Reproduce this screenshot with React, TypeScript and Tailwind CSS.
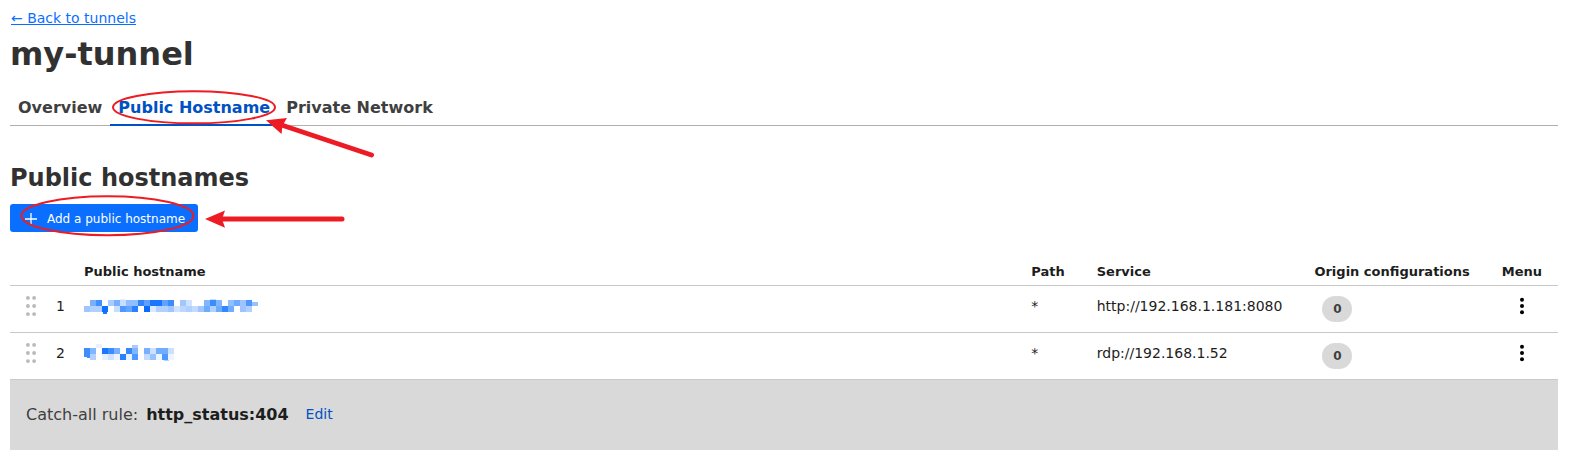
import React from "react";

const tabs = [
  { label: "Overview", active: false },
  { label: "Public Hostname", active: true },
  { label: "Private Network", active: false },
];

type Block = [x: number, y: number, w: number, h: number, fill: string];

type Row = {
  id: number;
  service: string;
  viewBox: string;
  top: string[];
  bottom: string[];
  extra: Block[];
};

// Each entry is one cell of the redacted hostname; an empty string is a blank cell.
const rows: Row[] = [
  {
    id: 1,
    service: "http://192.168.1.181:8080",
    viewBox: "0 0 174 20",
    top: [
      "", "#78b0ff", "#4190ff", "", "#a8ccff", "#78b0ff", "#c8deff", "#90beff", "#90beff", "#2f84ff",
      "#5da0ff", "#1a75ff", "#1a75ff", "#5fa2ff", "#3b8bff", "", "#a0c8ff", "#cfe2ff", "", "",
      "#80b5ff", "#3b8dff", "#80b5ff", "", "#90beff", "#6eaaff", "#9dc4ff", "#4d97ff", "",
    ],
    bottom: [
      "#a0c6ff", "#b0d0ff", "#b0d0ff", "#0f6fff", "", "#c8deff", "#4f98ff", "#65a5ff", "#2a80ff", "",
      "#0a6cff", "#dceaff", "#b0d0ff", "#b0d0ff", "#a0c6ff", "#d0e3ff", "#bcd7ff", "#b0d0ff", "#c4dbff", "#a0c6ff",
      "#6dabff", "#b0d0ff", "#6dabff", "#3388ff", "#70acff", "", "#9dc4ff", "#b0d0ff",
    ],
    extra: [
      [36, 3, 6, 1, "#e3eeff"],
      [126, 3, 6, 1, "#c8deff"],
      [19, 16, 4, 2, "#1a78ff"],
      [168, 6, 6, 4, "#98c2ff"],
    ],
  },
  {
    id: 2,
    service: "rdp://192.168.1.52",
    viewBox: "0 -1 174 20",
    top: [
      "#3d8dff", "#80b5ff", "", "#1a78ff", "#3d8dff", "#78b0ff", "", "#3688ff", "#80b5ff", "",
      "#78b0ff", "#cde1ff", "#70acff", "#70acff", "#cde1ff",
    ],
    bottom: [
      "", "#b0d0ff", "", "#e6f0ff", "#cfe2ff", "#edf4ff", "#2a80ff", "#e8f1ff", "#4f98ff", "",
      "#c4dbff", "#98c2ff", "#eef5ff", "#4f98ff", "#eef5ff",
    ],
    extra: [
      [12, 0, 6, 4, "#eaf2ff"],
      [48, 1, 6, 3, "#a8ccff"],
      [0, 10, 6, 3, "#3d8dff"],
      [3, 13, 3, 1, "#3d8dff"],
      [80, 16, 5, 1, "#b0d0ff"],
    ],
  },
];

function Redacted({ row }: { row: Row }) {
  return (
    <svg width="174" height="20" viewBox={row.viewBox} shapeRendering="crispEdges" role="img" aria-label="Hidden hostname">
      {row.top.map((c, i) => (c ? <rect key={"t" + i} x={i * 6} y={4} width={6} height={6} fill={c} /> : null))}
      {row.bottom.map((c, i) => (c ? <rect key={"b" + i} x={i * 6} y={10} width={6} height={6} fill={c} /> : null))}
      {row.extra.map(([x, y, w, h, c], i) => (
        <rect key={"e" + i} x={x} y={y} width={w} height={h} fill={c} />
      ))}
    </svg>
  );
}

function Grip() {
  return (
    <svg width="10" height="20" viewBox="0 0 10 20" fill="#b9b9b9" aria-hidden="true">
      {[1.9, 10, 18.1].map((y) => (
        <React.Fragment key={y}>
          <circle cx="1.9" cy={y} r="1.9" />
          <circle cx="8.1" cy={y} r="1.9" />
        </React.Fragment>
      ))}
    </svg>
  );
}

function Annotations() {
  return (
    <svg
      className="pointer-events-none absolute top-0 left-0"
      width="400"
      height="240"
      viewBox="0 0 400 240"
      fill="none"
      aria-hidden="true"
    >
      <g stroke="#ed1c24" strokeWidth="2">
        <ellipse cx="194" cy="107.3" rx="81" ry="16" />
        <ellipse cx="107.5" cy="215.7" rx="86" ry="19.5" />
      </g>
      <g stroke="#ed1c24" strokeWidth="5" strokeLinecap="round">
        <path d="M280 124.5L371.5 155" />
        <path d="M221 219H342" />
      </g>
      <g fill="#ed1c24">
        <path d="M266 120.300L287 118L282.500 125.500L281.500 134Z" />
        <path d="M205 219L225 210.500L222 219L225 227.800Z" />
      </g>
    </svg>
  );
}

export default function App() {
  return (
    <main className="relative bg-white pt-2 pr-[11px] pb-3.5 pl-2.5 font-['DejaVu_Sans',sans-serif] text-sm text-[#1d1d1d]">
      <div className="px-px">
        <a href="#tunnels" className="block w-fit leading-5 text-[#0a6fff] underline">
          ← Back to tunnels
        </a>
      </div>
      <h1 className="mt-1.5 text-[32px] leading-10 font-bold text-[#313131]">my-tunnel</h1>

      <nav className="mt-4 flex border-b border-[#b0b0b0]" aria-label="Tunnel sections">
        {tabs.map((t) => (
          <a
            key={t.label}
            href="#tab"
            aria-current={t.active ? "page" : undefined}
            className={
              t.active
                ? "-mb-px border-b-2 border-[#0051c3] px-2 pt-1.5 pb-1 text-base font-bold text-[#0051c3]"
                : "-mb-px border-b-2 border-transparent px-2 pt-1.5 pb-1 text-base font-bold text-[#3f3f3f]"
            }
          >
            {t.label}
          </a>
        ))}
      </nav>

      <h2 className="mt-9 text-2xl leading-8 font-bold text-[#313131]">Public hostnames</h2>

      <button
        type="button"
        className="mt-2.5 flex h-7 items-center gap-2.5 rounded-[3px] bg-[#0a6fff] pt-px pr-[13px] pl-[15px] text-xs text-white"
      >
        <svg width="12" height="12" viewBox="0 0 12 12" stroke="#ffffff" strokeWidth="1.3" aria-hidden="true">
          <path d="M6 0V12M0 6H12" />
        </svg>
        Add a public hostname
      </button>

      <table className="mt-6 w-full border-collapse text-left">
        <thead>
          <tr className="border-b border-[#c9c9c9] text-[13px] leading-5 whitespace-nowrap">
            <th className="p-0" aria-label="Reorder" />
            <th className="p-0" aria-label="Order" />
            <th className="w-full px-4 pt-1.5 pb-[3px]">Public hostname</th>
            <th className="px-4 pt-1.5 pb-[3px]">Path</th>
            <th className="px-4 pt-1.5 pb-[3px]">Service</th>
            <th className="px-4 pt-1.5 pb-[3px]">Origin configurations</th>
            <th className="px-4 pt-1.5 pb-[3px]">Menu</th>
          </tr>
        </thead>
        <tbody>
          {rows.map((row) => (
            <tr key={row.id} className="h-[47px] border-b border-[#c9c9c9] align-top leading-5 whitespace-nowrap">
              <td className="pt-2.5 pl-4">
                <button type="button" aria-label="Drag to reorder" className="block">
                  <Grip />
                </button>
              </td>
              <td className="pt-2.5 pr-[3px] pl-5">{row.id}</td>
              <td className="px-4 pt-2.5">
                <div className="h-5">
                  <Redacted row={row} />
                </div>
              </td>
              <td className="px-4 pt-2.5">*</td>
              <td className="px-4 pt-2.5">{row.service}</td>
              <td className="px-6 pt-2.5">
                <span className="flex h-[26px] w-[30px] items-center justify-center rounded-full bg-[#d9d9d9] text-xs font-bold text-[#3f3f3f]">
                  0
                </span>
              </td>
              <td className="px-4 pt-2.5">
                <button type="button" aria-label="Row menu" className="mx-auto block">
                  <svg width="6" height="20" viewBox="0 0 6 20" fill="#000" aria-hidden="true">
                    <circle cx="3" cy="3.800" r="2" />
                    <circle cx="3" cy="10" r="2" />
                    <circle cx="3" cy="16.200" r="2" />
                  </svg>
                </button>
              </td>
            </tr>
          ))}
        </tbody>
      </table>

      <footer className="flex items-center bg-[#d9d9d9] px-4 py-[23px] text-base text-[#3f3f3f]">
        <span>Catch-all rule:</span>
        <strong className="ml-2 text-[#1d1d1d]">http_status:404</strong>
        <a href="#edit" className="ml-4 px-px pb-0.5 text-sm text-[#0051c3]">
          Edit
        </a>
      </footer>

      <Annotations />
    </main>
  );
}
